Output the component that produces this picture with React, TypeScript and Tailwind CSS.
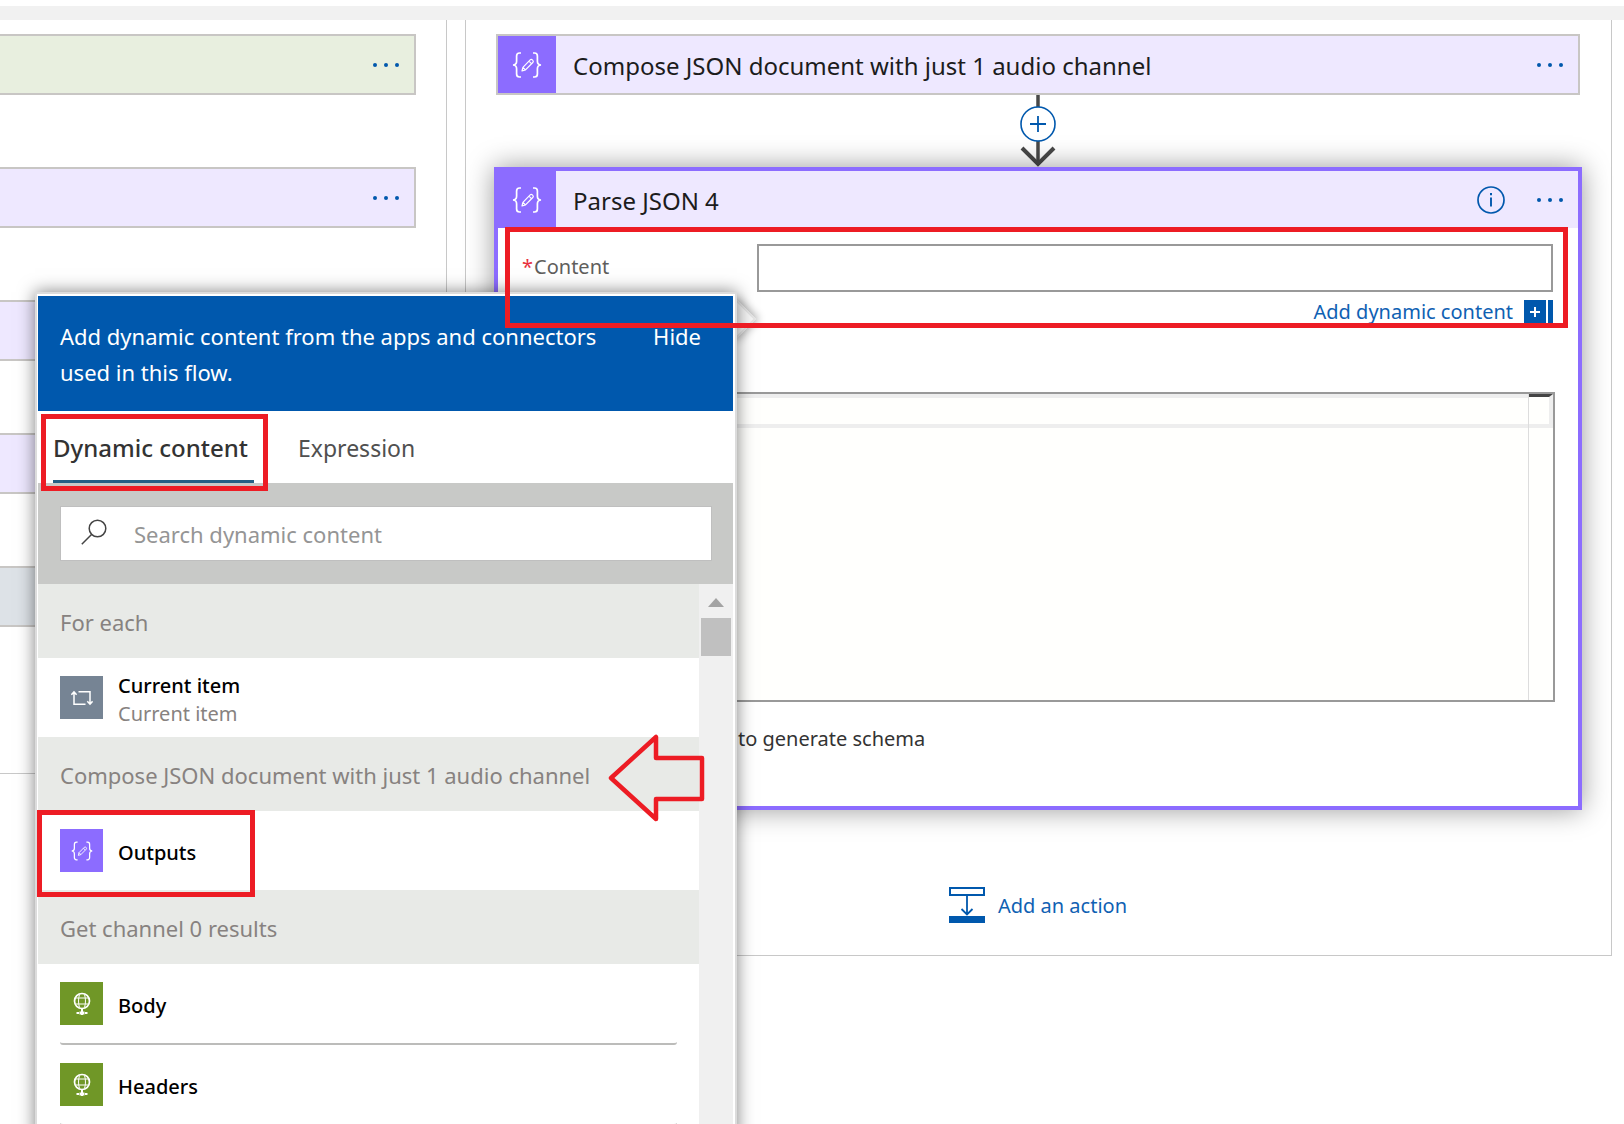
import React from "react";
import clsx from "clsx";

function BracesPencil({ className }: { className: string }) {
  return (
    <svg viewBox="0 0 30 26" className={className} fill="none" stroke="currentColor" aria-hidden="true">
      <path d="M9 1H7.500C5.400 1 4.600 2 4.600 4v5.200c0 2.300-1 3.600-3.600 3.800 2.600.2 3.600 1.500 3.600 3.800V22c0 2 .8 3 2.900 3H9" strokeWidth="1.700" />
      <path d="M21 1h1.500c2.100 0 2.900 1 2.900 3v5.200c0 2.300 1 3.600 3.600 3.800-2.600.2-3.600 1.500-3.600 3.800V22c0 2-.8 3-2.900 3H21" strokeWidth="1.700" />
      <path d="M10 19l.9-3.700 7.300-7.400c.6-.6 1.500-.6 2.100 0l.5.5c.6.6.6 1.500 0 2.100l-7.300 7.400zM10.900 15.300l2.600 2.600M17 9.200l2.600 2.600" strokeWidth="1.200" strokeLinejoin="round" />
    </svg>
  );
}

function LoopIcon() {
  return (
    <svg viewBox="0 0 22 16" className="h-4 w-[22px]" fill="none" stroke="currentColor" strokeWidth="1.500" aria-hidden="true">
      <path d="M7.500 1.700H19V14M16.300 11.300L19 14.200l2.600-2.900" />
      <path d="M14.500 14.300H3V2M.4 4.800L3 1.900l2.600 2.900" />
    </svg>
  );
}

function GlobeIcon() {
  return (
    <svg viewBox="0 0 18 24" className="h-6 w-[18px]" fill="none" stroke="currentColor" aria-hidden="true">
      <circle cx="9" cy="9" r="7.500" strokeWidth="1.700" />
      <path d="M2.500 6h13M2.500 12h13M6.500 2.500c-1.300 4-1.300 9 0 13M11.500 2.500c1.300 4 1.300 9 0 13" strokeWidth="1" />
      <path d="M9 16.500v6.500" strokeWidth="2" />
      <path d="M3.500 21h2.500M12 21h2.500" strokeWidth="2" />
      <path d="M6.500 21h5" strokeWidth="3" />
    </svg>
  );
}

function MoreButton() {
  return (
    <button type="button" aria-label="More commands" className="flex h-8 w-8 shrink-0 items-center justify-center text-[#0058ad]">
      <svg viewBox="0 0 28 6" className="h-[6px] w-7" fill="currentColor" aria-hidden="true">
        <circle cx="3" cy="3" r="2" />
        <circle cx="14" cy="3" r="2" />
        <circle cx="25" cy="3" r="2" />
      </svg>
    </button>
  );
}

const sideCards = [
  { color: "bg-[#e8efdf]", menu: true },
  { color: "bg-[#eee8ff]", menu: true },
  { color: "bg-[#eee8ff]", menu: false },
  { color: "bg-[#eee8ff]", menu: false },
  { color: "bg-[#dde2e7]", menu: false },
];

function SideBranch() {
  return (
    <section className="flex w-[447px] shrink-0 flex-col gap-[72px] self-start border-r border-b border-[#c8c8c8] pt-[14px] pr-[30px] pb-[146px]">
      {sideCards.map((card, i) => (
        <div key={i} className={clsx("flex h-[61px] items-center justify-end border-2 border-l-0 border-[#c8c6c4] pr-3", card.color)}>
          {card.menu && <MoreButton />}
        </div>
      ))}
    </section>
  );
}

function CardIcon() {
  return (
    <span className="flex w-[58px] shrink-0 items-center justify-center self-stretch bg-[#8c6cff] text-white">
      <BracesPencil className="h-[26px] w-[30px]" />
    </span>
  );
}

function Connector() {
  return (
    <div className="flex h-[72px] flex-col items-center">
      <svg viewBox="0 0 36 72" className="h-[72px] w-9" fill="none" aria-hidden="true">
        <path d="M18 0v70" stroke="#484848" strokeWidth="3.500" />
        <path d="M2 53l16 16 16-16" stroke="#484848" strokeWidth="4" />
        <circle cx="18" cy="29" r="17" fill="#fff" stroke="#0058ad" strokeWidth="1.600" />
        <path d="M10 29h16M18 21v16" stroke="#0058ad" strokeWidth="1.800" />
      </svg>
    </div>
  );
}

function ParseCard() {
  return (
    <article className="-mx-[2px] border-4 border-[#8c6cff] bg-white shadow-[0_0_26px_rgba(0,0,0,0.4)]">
      <header className="flex h-[57px] items-center bg-[#eee8ff] pr-3">
        <CardIcon />
        <h2 className="flex-1 pt-[2px] pl-[17px] text-[24px] leading-8 text-[#1c1c1c]">Parse JSON 4</h2>
        <button type="button" aria-label="Information" className="mr-[29px] text-[#0058ad]">
          <svg viewBox="0 0 28 28" className="h-7 w-7" fill="none" stroke="currentColor" aria-hidden="true">
            <circle cx="14" cy="14" r="13" strokeWidth="1.700" />
            <path d="M14 11.500v9" strokeWidth="1.900" />
            <path d="M14 7v2.200" strokeWidth="2" />
          </svg>
        </button>
        <MoreButton />
      </header>
      <div className="pr-[25px] pb-[53px] pl-6">
        <div className="relative pt-4">
          <div className="flex items-center">
            <label htmlFor="content" className="w-[235px] shrink-0 pb-[2px] text-[20px] leading-7 text-[#605e5c]">
              <span className="mr-[1px] text-[#e8313e]">*</span>Content
            </label>
            <input id="content" type="text" className="h-12 min-w-0 flex-1 border-2 border-[#999] bg-white px-3 text-[20px] outline-none" />
          </div>
          <div className="mt-2 flex h-6 items-center justify-end gap-[11px]">
            <a href="#dynamic" className="text-[20px] leading-6 text-[#0f61b3]">Add dynamic content</a>
            <span className="flex h-6 gap-[2px]">
              <button type="button" aria-label="Insert" className="flex w-[22px] items-center justify-center bg-[#0058ad] text-white">
                <svg viewBox="0 0 10 10" className="h-[10px] w-[10px]" stroke="currentColor" strokeWidth="2" aria-hidden="true">
                  <path d="M0 5h10M5 0v10" />
                </svg>
              </button>
              <span className="w-[5px] bg-[#0058ad]" />
            </span>
          </div>
          <div className="pointer-events-none absolute -top-[1px] -right-[15px] -bottom-[4px] -left-[17px] z-20 border-5 border-[#ed1c24]" />
        </div>
        <div className="mt-[68px] -mr-[2px] flex h-[310px] flex-col border-2 border-[#999] bg-[#fffffd]">
          <div className="flex flex-1">
            <div className="flex-1">
              <div className="h-[34px] border-y-4 border-[#eee]" />
            </div>
            <div className="w-[25px] border-l border-[#ddd]">
              <div className="h-[34px] border-t-3 border-r-4 border-b-4 border-[#eee] border-t-[#444]" />
            </div>
          </div>
        </div>
        <p className="mt-[23px] pl-[216px] text-[20px] leading-7 text-[#333]">to generate schema</p>
      </div>
    </article>
  );
}

function MainBranch() {
  return (
    <section className="mr-3 ml-[18px] flex min-w-0 flex-1 flex-col self-start border-r border-b border-l border-[#c8c8c8] pt-[14px] pr-[31px] pb-8 pl-[30px]">
      <div className="flex h-[61px] items-center border-2 border-[#c8c6c4] bg-[#eee8ff] pr-3">
        <CardIcon />
        <h2 className="flex-1 pt-[2px] pl-[17px] text-[24px] leading-8 text-[#1c1c1c]">Compose JSON document with just 1 audio channel</h2>
        <MoreButton />
      </div>
      <Connector />
      <ParseCard />
      <button type="button" className="mt-[77px] flex items-center justify-center gap-[13px] text-[20px] leading-7 text-[#0f61b3]">
        <svg viewBox="0 0 36 36" className="h-9 w-9" fill="none" stroke="#0058ad" aria-hidden="true">
          <path d="M1 1h34v7H1z" strokeWidth="2" />
          <path d="M18 8v19M12.500 22l5.500 5.500 5.500-5.500" strokeWidth="1.800" />
          <path d="M0 32.500h36" strokeWidth="7" />
        </svg>
        <span className="pt-[2px]">Add an action</span>
      </button>
    </section>
  );
}

function SectionTitle({ title, arrow }: { title: string; arrow?: boolean }) {
  return (
    <div className="relative flex h-[74px] items-center bg-[#e8eae7] pt-[2px] pl-[22px]">
      <h3 className="text-[22px] leading-8 text-[#878280]">{title}</h3>
      {arrow && (
        <svg viewBox="0 0 100 92" className="pointer-events-none absolute -top-[5px] left-[568px] z-20 h-[92px] w-[100px]" fill="none" aria-hidden="true">
          <path d="M5 46L50 5v21h46v41H50v20z" stroke="#ed1c24" strokeWidth="4.500" strokeLinejoin="round" />
        </svg>
      )}
    </div>
  );
}

type ItemProps = {
  title: string;
  subtitle?: string;
  color: string;
  icon: React.ReactNode;
  divider?: boolean;
  outlined?: boolean;
};

function Item({ title, subtitle, color, icon, divider, outlined }: ItemProps) {
  return (
    <div className="relative px-[22px]">
      <button type="button" className={clsx("flex w-full items-center gap-[15px] text-left", divider ? "h-[81px] rounded-[3px] border-b-2 border-[#bcbcba]" : "h-[79px]")}>
        <span className={clsx("flex h-[43px] w-[43px] shrink-0 items-center justify-center text-white", color)}>{icon}</span>
        <span className="flex flex-col pt-1">
          <span className="text-[20px] leading-7 font-medium text-black">{title}</span>
          {subtitle && <span className="text-[20px] leading-7 text-[#878280]">{subtitle}</span>}
        </span>
      </button>
      {outlined && <div className="pointer-events-none absolute -top-[1px] -bottom-[7px] -left-[1px] z-10 w-[218px] border-5 border-[#ed1c24]" />}
    </div>
  );
}

function DynamicContentPanel() {
  return (
    <aside className="absolute top-[292px] -bottom-4 left-[35px] z-10 w-[702px]">
      <div className="absolute top-[12px] -right-[13px] h-[30px] w-[30px] rotate-45 border-2 border-[#e4e4e4] bg-[#f6f6f6] shadow-[2px_-2px_8px_rgba(0,0,0,0.3)]" />
      <div className="relative flex h-full flex-col border-2 border-[#dcdcdc] bg-white pt-[2px] pr-[2px] pl-[1px] shadow-[0_0_16px_rgba(0,0,0,0.5)]">
        <header className="flex items-start justify-between bg-[#0058ad] pt-[22px] pr-8 pb-[21px] pl-[22px] text-[22px] leading-9 text-white">
          <p className="w-[550px]">Add dynamic content from the apps and connectors used in this flow.</p>
          <button type="button">Hide</button>
        </header>
        <div role="tablist" className="flex h-[72px] shrink-0 gap-11 pl-[15px]">
          <div className="relative flex">
            <button type="button" role="tab" aria-selected="true" className="w-[201px] border-b-3 border-[#245f85] pt-1 text-left text-[24px] font-medium text-[#333]">
              Dynamic content
            </button>
            <div className="pointer-events-none absolute top-[3px] -right-[14px] -bottom-[8px] -left-[12px] border-5 border-[#ed1c24]" />
          </div>
          <button type="button" role="tab" aria-selected="false" className="pt-[2px] text-[23px] text-[#505050]">Expression</button>
        </div>
        <div className="bg-[#c8c9c7] py-[23px] pr-[21px] pl-[22px]">
          <label className="flex h-[55px] items-center border border-[#bfbfbf] bg-white pl-5">
            <svg viewBox="0 0 26 30" className="h-[30px] w-[26px] shrink-0" fill="none" stroke="#444" strokeWidth="1.500" aria-hidden="true">
              <circle cx="16.500" cy="9.500" r="8.300" />
              <path d="M10.500 15.500L.8 25.200" />
            </svg>
            <input type="search" aria-label="Search dynamic content" placeholder="Search dynamic content" className="ml-[27px] min-w-0 flex-1 text-[22px] leading-8 outline-none placeholder:text-[#959595]" />
          </label>
        </div>
        <div className="flex min-h-0 flex-1">
          <div className="flex-1">
            <SectionTitle title="For each" />
            <Item title="Current item" subtitle="Current item" color="bg-[#768494]" icon={<LoopIcon />} />
            <SectionTitle title="Compose JSON document with just 1 audio channel" arrow />
            <Item title="Outputs" color="bg-[#8c6cff]" icon={<BracesPencil className="h-5 w-[22px]" />} outlined />
            <SectionTitle title="Get channel 0 results" />
            <Item title="Body" color="bg-[#709727]" icon={<GlobeIcon />} divider />
            <Item title="Headers" color="bg-[#709727]" icon={<GlobeIcon />} divider />
          </div>
          <div className="flex w-[34px] flex-col items-center bg-[#f0f0f0] pt-[14px]">
            <svg viewBox="0 0 16 9" className="h-[9px] w-4" fill="#a3a3a3" aria-hidden="true">
              <path d="M0 9l8-9 8 9z" />
            </svg>
            <div className="mt-[11px] h-[38px] w-[30px] bg-[#c0c0c0]" />
          </div>
        </div>
      </div>
    </aside>
  );
}

export default function App() {
  return (
    <main className="relative h-screen overflow-hidden bg-white pt-[6px] font-['Noto_Sans',sans-serif]">
      <div className="h-[14px] bg-[#f1f1f1]" />
      <div className="flex">
        <SideBranch />
        <MainBranch />
      </div>
      <DynamicContentPanel />
    </main>
  );
}
